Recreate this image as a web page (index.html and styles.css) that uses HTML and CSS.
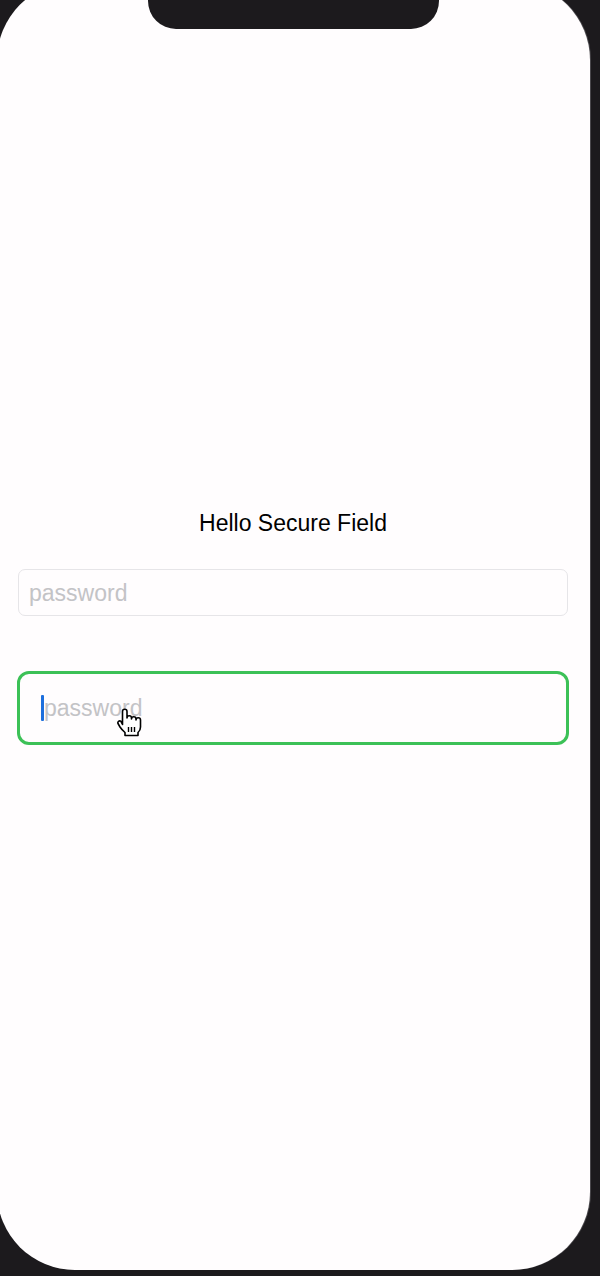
FILE: index.html
```html
<!DOCTYPE html>
<html lang="en">
<head>
<meta charset="utf-8">
<title>Hello Secure Field</title>
<link rel="stylesheet" href="styles.css">
</head>
<body>
  <div class="device">
    <div class="screen">
      <div class="notch"></div>
      <h1 class="title">Hello Secure Field</h1>
      <div class="field field-plain">
        <span class="placeholder">password</span>
      </div>
      <div class="field field-focused">
        <span class="caret"></span>
        <span class="placeholder">password</span>
        <svg class="pointer" width="28" height="29" viewBox="0 0 28 29" aria-hidden="true">
          <path d="M5.5 13 V3.5 A2.25 2.25 0 0 1 10 3.5 V10 A2.25 2.25 0 0 1 14.5 10 V11 A2.25 2.25 0 0 1 19 11 V12 A2.25 2.25 0 0 1 23.5 12 V19 Q23.5 22.5 21 24.5 V27.5 H8 V24.5 Q5 22 3 19 L1 15.5 A1.9 1.9 0 0 1 3.8 13.2 L5.5 16.5 Z" fill="#fff" stroke="#000" stroke-width="1.6" stroke-linejoin="round"/>
          <path d="M11.5 19 V24 M14.5 19 V24 M17.5 19 V24" stroke="#000" stroke-width="1.4"/>
        </svg>
      </div>
    </div>
  </div>
</body>
</html>
```
FILE: styles.css
```css
html, body {
  margin: 0;
  padding: 0;
}

body {
  width: 600px;
  height: 1276px;
  overflow: hidden;
  background: #1c1a1d;
  font-family: "Liberation Sans", Arial, sans-serif;
}

.device {
  width: 600px;
  height: 1276px;
  overflow: hidden;
  position: relative;
}

.screen {
  position: relative;
  margin: -18px 0 0 -3px;
  width: 593px;
  height: 1288px;
  border-radius: 78px;
  background: #fffdfe;
  box-shadow: 1px 0 0 #4a484c;
  display: flex;
  flex-direction: column;
  padding: 528px 22px 0 21px;
  box-sizing: border-box;
}

.notch {
  position: absolute;
  left: 151px;
  top: 0;
  width: 291px;
  height: 47px;
  background: #1c1a1d;
  border-radius: 0 0 28px 28px;
}

.title {
  margin: 0;
  font-size: 23px;
  line-height: 26px;
  font-weight: 400;
  color: #000;
  text-align: center;
}

.field {
  display: flex;
  align-items: center;
  box-sizing: border-box;
  position: relative;
}

.field-plain {
  margin-top: 33px;
  height: 47px;
  border: 1px solid #e6e5e8;
  border-radius: 7px;
  padding-left: 10px;
}

.field-focused {
  margin: 55px -1px 0;
  height: 74px;
  border: 3px solid #3cc157;
  border-radius: 12px;
  padding-left: 21px;
}

.placeholder {
  font-size: 23px;
  color: #c3c3c6;
  line-height: 28px;
}

.caret {
  width: 3px;
  height: 26px;
  background: #1d6fdd;
  border-radius: 1px;
}

.pointer {
  position: absolute;
  left: 97px;
  top: 34px;
}
```
